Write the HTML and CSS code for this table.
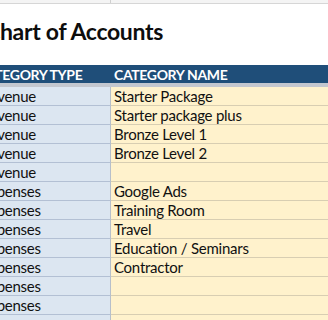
FILE: index.html
```html
<!DOCTYPE html>
<html>
<head>
<meta charset="utf-8">
<link rel="stylesheet" href="styles.css">
</head>
<body>
<div class="sheet">
  <div class="toprow"><div class="tc a"></div><div class="tc b"></div></div>
  <div class="title">Chart of Accounts</div>
  <div class="grid">
    <div class="hd a">CATEGORY TYPE</div><div class="hd b">CATEGORY NAME</div>
    <div class="c a">Revenue</div><div class="c b">Starter Package</div>
    <div class="c a">Revenue</div><div class="c b">Starter package plus</div>
    <div class="c a">Revenue</div><div class="c b">Bronze Level 1</div>
    <div class="c a">Revenue</div><div class="c b">Bronze Level 2</div>
    <div class="c a">Revenue</div><div class="c b"></div>
    <div class="c a">Expenses</div><div class="c b">Google Ads</div>
    <div class="c a">Expenses</div><div class="c b">Training Room</div>
    <div class="c a">Expenses</div><div class="c b">Travel</div>
    <div class="c a">Expenses</div><div class="c b">Education / Seminars</div>
    <div class="c a">Expenses</div><div class="c b">Contractor</div>
    <div class="c a">Expenses</div><div class="c b"></div>
    <div class="c a">Expenses</div><div class="c b"></div>
    <div class="c a">Expenses</div><div class="c b"></div>
  </div>
</div>
</body>
</html>
```
FILE: styles.css
```css
html, body {
  margin: 0;
  padding: 0;
  background: #ffffff;
  overflow: hidden;
  width: 328px;
  height: 320px;
}
.sheet {
  margin-left: -18px;
  width: 346px;
  font-family: Lato, "Liberation Sans", sans-serif;
  color: #111111;
}
.toprow {
  display: grid;
  grid-template-columns: 129px 1fr;
  height: 3px;
  border-bottom: 1px solid #d6d6d6;
  background: #f4f4f4;
}
.toprow .a {
  border-right: 1px solid #d0d0d0;
}
.title {
  height: 61px;
  box-sizing: border-box;
  padding-top: 13px;
  padding-left: 3px;
  font-size: 23px;
  letter-spacing: -0.3px;
  font-weight: 700;
  line-height: 28px;
  color: #0d0d0d;
}
.grid {
  display: grid;
  grid-template-columns: 129px 1fr;
}
.hd {
  background: #1f4e79;
  color: #ffffff;
  font-weight: 700;
  font-size: 14px;
  letter-spacing: -0.35px;
  height: 18px;
  line-height: 19px;
  padding-left: 3px;
  border-bottom: 4px solid #c3c7cf;
  white-space: nowrap;
  overflow: hidden;
}
.hd.a {
  text-indent: -8px;
}
.c {
  height: 18px;
  line-height: 19px;
  font-size: 15px;
  letter-spacing: -0.25px;
  padding-left: 3px;
  white-space: nowrap;
  overflow: hidden;
}
.c.a {
  background: #dce6f1;
  border-bottom: 1px solid #b3c0d4;
  border-right: 1px solid #b7bfca;
  text-indent: -4px;
}
.c.b {
  background: #fff2cc;
  border-bottom: 1px solid #d8ceb2;
}
```
